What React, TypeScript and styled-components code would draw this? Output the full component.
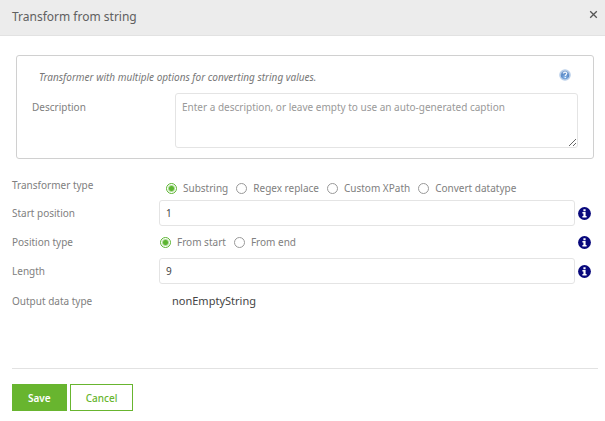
import React, { useState } from "react";
import styled, { createGlobalStyle } from "styled-components";

const GlobalStyle = createGlobalStyle`
  *, *::before, *::after { box-sizing: border-box; }
  body {
    margin: 0;
    background: #fff;
    color: #808080;
    font-family: "Noto Sans", "Open Sans", sans-serif;
    font-size: 10px;
    line-height: 16px;
  }
  button, input, textarea { font: inherit; }
`;

const Header = styled.header`
  display: flex;
  align-items: flex-start;
  justify-content: space-between;
  height: 36px;
  padding: 7px 5px 0 12px;
  background: #ececec;
  border-bottom: 1px solid #e2e2e2;
`;

const Title = styled.h1`
  margin: 0;
  color: #606060;
  font-size: 12px;
  font-weight: 400;
  line-height: 20px;
`;

const CloseButton = styled.button`
  display: flex;
  padding: 3px 2px;
  border: 0;
  background: none;
  color: #555;
  cursor: pointer;
`;

const Form = styled.form`
  padding: 19px 7px 10px 12px;
`;

const Intro = styled.section`
  margin: 0 4px;
  padding: 13px 15px 10px;
  border: 1px solid #d0d0d0;
  border-radius: 3px;
`;

const IntroTop = styled.div`
  display: flex;
  justify-content: space-between;
  align-items: flex-start;
  padding: 0 7px;
  margin-bottom: 7px;
`;

const IntroText = styled.p`
  margin: 0;
  padding-bottom: 1px;
  color: #777;
  font-style: italic;
`;

const IconButton = styled.button`
  display: flex;
  padding: 0;
  border: 0;
  background: none;
  cursor: pointer;
`;

const DescriptionRow = styled.div`
  display: grid;
  grid-template-columns: 143px 1fr;
`;

const DescriptionLabel = styled.label`
  padding-top: 6px;
`;

const TextArea = styled.textarea`
  display: block;
  width: 100%;
  height: 55px;
  padding: 5px 6px;
  border: 1px solid #e4e4e4;
  border-radius: 3px;
  background: #fff;
  color: #444;
  outline: none;
  resize: vertical;
  &::placeholder { color: #999; opacity: 1; }
`;

const Rows = styled.div`
  display: grid;
  gap: 3px;
  margin-top: 13px;
`;

const Row = styled.div`
  display: grid;
  grid-template-columns: 147px 1fr 23px;
  align-items: center;
  min-height: 26px;
`;

const TypeRow = styled(Row)`
  align-items: start;
  min-height: 25px;
  padding-top: 5px;
`;

const OutputRow = styled(Row)`
  min-height: 28px;
`;

const TextInput = styled.input`
  width: 100%;
  height: 26px;
  padding: 0 6px;
  border: 1px solid #e4e4e4;
  border-radius: 3px;
  background: #fff;
  color: #444;
  outline: none;
`;

const RadioGroup = styled.div<{ $inset?: boolean }>`
  display: flex;
  gap: 8px;
  padding: ${(p) => (p.$inset ? "3px 0 0 7px" : "0 0 0 1px")};
`;

const RadioLabel = styled.label`
  display: flex;
  align-items: center;
  gap: 6px;
  white-space: nowrap;
  cursor: pointer;
`;

const Radio = styled.input`
  appearance: none;
  flex: none;
  width: 11px;
  height: 11px;
  margin: 0;
  border: 1px solid #999;
  border-radius: 50%;
  background: #fff;
  &:checked {
    border-color: #5cb531;
    background: radial-gradient(circle, #5cb531 0 2px, #fff 4px);
  }
`;

const InfoButton = styled(IconButton)`
  justify-self: start;
  margin-left: 3px;
`;

const Output = styled.output`
  padding: 0 13px;
  color: #444;
  font-size: 11px;
`;

const Rule = styled.hr`
  height: 1px;
  margin: 53px 0 15px;
  border: 0;
  background: #e2e2e2;
`;

const Actions = styled.div`
  display: flex;
  gap: 3px;
`;

const Button = styled.button<{ $primary?: boolean }>`
  height: 27px;
  padding: 0 15px;
  border: 1px solid #68b52f;
  background: ${(p) => (p.$primary ? "#68b52f" : "#fff")};
  color: ${(p) => (p.$primary ? "#fff" : "#68b52f")};
  font-weight: ${(p) => (p.$primary ? 600 : 500)};
  cursor: pointer;
`;

const CloseIcon = () => (
  <svg width="9" height="9" viewBox="0 0 9 9" aria-hidden="true">
    <path d="M1.2 1.2l6.6 6.6M7.8 1.2L1.2 7.8" stroke="currentColor" strokeWidth="1.3" fill="none" />
  </svg>
);

const HelpIcon = () => (
  <svg width="12" height="12" viewBox="0 0 12 12" aria-hidden="true">
    <defs>
      <radialGradient id="helpFill" cx="50%" cy="75%" r="70%">
        <stop offset="0" stopColor="#8fbcec" />
        <stop offset="0.6" stopColor="#5b8bc8" />
        <stop offset="1" stopColor="#86a8d4" />
      </radialGradient>
    </defs>
    <circle cx="6" cy="6" r="5.8" fill="#b9cfea" />
    <circle cx="6" cy="6" r="4.3" fill="url(#helpFill)" />
    <path d="M4.5 4.6c0-1.9 3.2-1.9 3.2-.1 0 1.2-1.4 1.2-1.4 2.5M6.3 7.9v1.1" stroke="#f2f7fd" strokeWidth="1.3" fill="none" />
  </svg>
);

const InfoIcon = () => (
  <svg width="13" height="13" viewBox="0 0 13 13" aria-hidden="true">
    <circle cx="6.5" cy="6.5" r="6.4" fill="#08087c" />
    <path d="M5.4 2.2h2.2v2H5.4zM4.4 5.1h3.2v3.9h1v1.5H4.4V9h1V6.5h-1z" fill="#fff" />
  </svg>
);

function Info({ label }: { label: string }) {
  return (
    <InfoButton type="button" aria-label={label}>
      <InfoIcon />
    </InfoButton>
  );
}

interface RadiosProps {
  name: string;
  labelId: string;
  options: string[];
  inset?: boolean;
}

function Radios({ name, labelId, options, inset }: RadiosProps) {
  const [value, setValue] = useState(options[0]);
  return (
    <RadioGroup role="radiogroup" aria-labelledby={labelId} $inset={inset}>
      {options.map((option) => (
        <RadioLabel key={option}>
          <Radio type="radio" name={name} checked={value === option} onChange={() => setValue(option)} />
          {option}
        </RadioLabel>
      ))}
    </RadioGroup>
  );
}

export default function App() {
  return (
    <>
      <GlobalStyle />
      <Header>
        <Title>Transform from string</Title>
        <CloseButton type="button" aria-label="Close">
          <CloseIcon />
        </CloseButton>
      </Header>
      <Form onSubmit={(e) => e.preventDefault()}>
        <Intro>
          <IntroTop>
            <IntroText>Transformer with multiple options for converting string values.</IntroText>
            <IconButton type="button" aria-label="Help">
              <HelpIcon />
            </IconButton>
          </IntroTop>
          <DescriptionRow>
            <DescriptionLabel htmlFor="description">Description</DescriptionLabel>
            <TextArea
              id="description"
              placeholder="Enter a description, or leave empty to use an auto-generated caption"
            />
          </DescriptionRow>
        </Intro>
        <Rows>
          <TypeRow>
            <span id="transformer-type">Transformer type</span>
            <Radios
              name="transformerType"
              labelId="transformer-type"
              options={["Substring", "Regex replace", "Custom XPath", "Convert datatype"]}
              inset
            />
          </TypeRow>
          <Row>
            <label htmlFor="start">Start position</label>
            <TextInput id="start" type="text" defaultValue="1" />
            <Info label="About start position" />
          </Row>
          <Row>
            <span id="position-type">Position type</span>
            <Radios name="positionType" labelId="position-type" options={["From start", "From end"]} />
            <Info label="About position type" />
          </Row>
          <Row>
            <label htmlFor="length">Length</label>
            <TextInput id="length" type="text" defaultValue="9" />
            <Info label="About length" />
          </Row>
          <OutputRow>
            <label htmlFor="output">Output data type</label>
            <Output id="output">nonEmptyString</Output>
          </OutputRow>
        </Rows>
        <Rule />
        <Actions>
          <Button type="submit" $primary>Save</Button>
          <Button type="button">Cancel</Button>
        </Actions>
      </Form>
    </>
  );
}
